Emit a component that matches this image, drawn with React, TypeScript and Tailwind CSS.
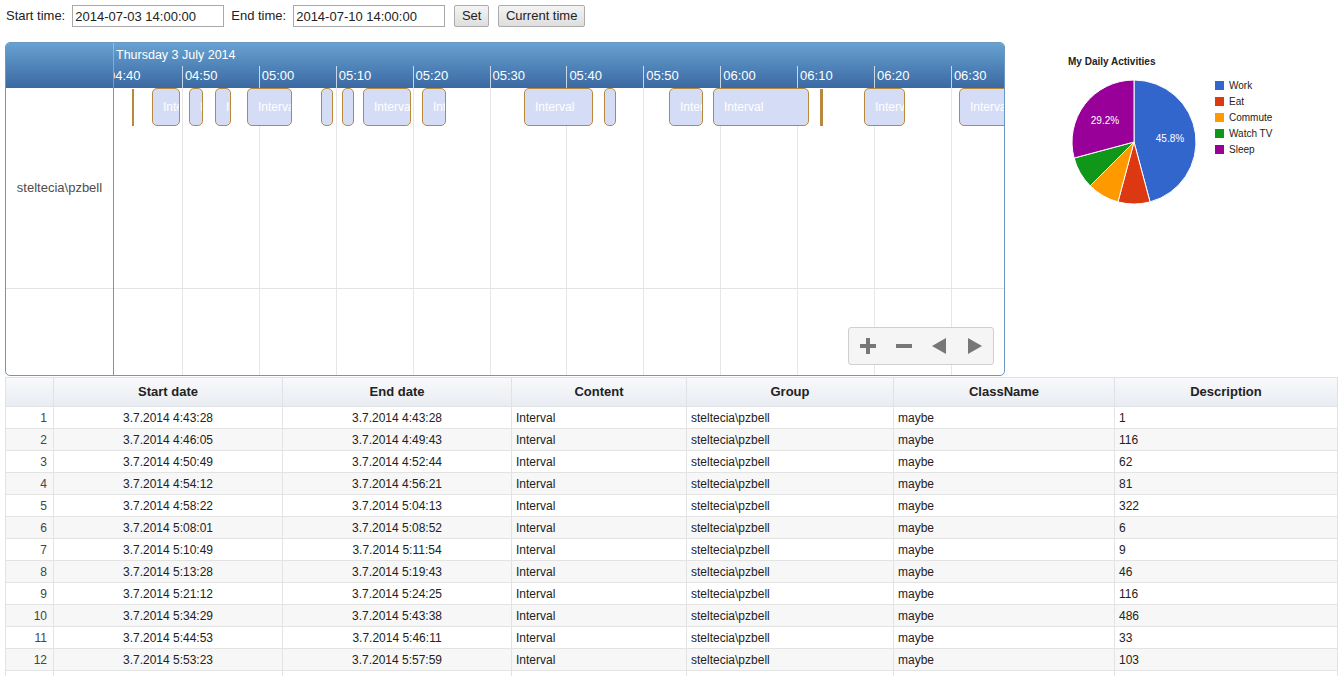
import React from "react";

const ticks = ["04:40", "04:50", "05:00", "05:10", "05:20", "05:30", "05:40", "05:50", "06:00", "06:10", "06:20", "06:30"];

// left / width in px, relative to the timeline canvas
const items: { l: number; w: number; line?: boolean }[] = [
  { l: 18, w: 2, line: true },
  { l: 38, w: 28 },
  { l: 75, w: 14 },
  { l: 101, w: 16 },
  { l: 133, w: 45 },
  { l: 207, w: 6 },
  { l: 228, w: 9 },
  { l: 249, w: 48 },
  { l: 308, w: 24 },
  { l: 410, w: 69 },
  { l: 490, w: 9 },
  { l: 555, w: 34 },
  { l: 599, w: 96 },
  { l: 706, w: 3, line: true },
  { l: 750, w: 41 },
  { l: 845, w: 60 },
];

const rows = [
  ["3.7.2014 4:43:28", "3.7.2014 4:43:28", "1"],
  ["3.7.2014 4:46:05", "3.7.2014 4:49:43", "116"],
  ["3.7.2014 4:50:49", "3.7.2014 4:52:44", "62"],
  ["3.7.2014 4:54:12", "3.7.2014 4:56:21", "81"],
  ["3.7.2014 4:58:22", "3.7.2014 5:04:13", "322"],
  ["3.7.2014 5:08:01", "3.7.2014 5:08:52", "6"],
  ["3.7.2014 5:10:49", "3.7.2014 5:11:54", "9"],
  ["3.7.2014 5:13:28", "3.7.2014 5:19:43", "46"],
  ["3.7.2014 5:21:12", "3.7.2014 5:24:25", "116"],
  ["3.7.2014 5:34:29", "3.7.2014 5:43:38", "486"],
  ["3.7.2014 5:44:53", "3.7.2014 5:46:11", "33"],
  ["3.7.2014 5:53:23", "3.7.2014 5:57:59", "103"],
  ["3.7.2014 5:59:10", "3.7.2014 6:04:02", "292"],
];

const slices = [
  { name: "Work", v: 11, c: "#3366cc" },
  { name: "Eat", v: 2, c: "#dc3912" },
  { name: "Commute", v: 2, c: "#ff9900" },
  { name: "Watch TV", v: 2, c: "#109618" },
  { name: "Sleep", v: 7, c: "#990099" },
];

function Pie() {
  const cx = 129;
  const cy = 100;
  const r = 62;
  const total = slices.reduce((s, x) => s + x.v, 0);
  let a = 0;
  const pt = (ang: number) => [cx + r * Math.sin(ang), cy - r * Math.cos(ang)];
  return (
    <svg width="334" height="200" className="block">
      <text x="63" y="23" fontSize="10" fontWeight="bold" fill="#222" fontFamily="Liberation Sans, Arial, sans-serif">
        My Daily Activities
      </text>
      {slices.map((s) => {
        const a0 = a;
        const a1 = a + (s.v / total) * Math.PI * 2;
        a = a1;
        const [x0, y0] = pt(a0);
        const [x1, y1] = pt(a1);
        const large = a1 - a0 > Math.PI ? 1 : 0;
        return (
          <path
            key={s.name}
            d={`M${cx} ${cy} L${x0} ${y0} A${r} ${r} 0 ${large} 1 ${x1} ${y1} Z`}
            fill={s.c}
            stroke="#fff"
            strokeWidth="1"
          />
        );
      })}
      <text x="165" y="100" fontSize="10" fill="#fff" textAnchor="middle" fontFamily="Liberation Sans, Arial, sans-serif">
        45.8%
      </text>
      <text x="100" y="82" fontSize="10" fill="#fff" textAnchor="middle" fontFamily="Liberation Sans, Arial, sans-serif">
        29.2%
      </text>
      {slices.map((s, i) => (
        <g key={s.name}>
          <rect x="210" y={39 + i * 16} width="9" height="9" fill={s.c} />
          <text x="224" y={47 + i * 16} fontSize="10" fill="#222" fontFamily="Liberation Sans, Arial, sans-serif">
            {s.name}
          </text>
        </g>
      ))}
    </svg>
  );
}

function Controls() {
  return (
    <div className="absolute right-[10px] bottom-[10px] flex h-[38px] w-[146px] items-center rounded-[3px] border border-[#cfcfcf] bg-[#f5f5f5]">
      <svg width="146" height="36" className="block">
        <rect x="11" y="16" width="16" height="4" fill="#777" />
        <rect x="17" y="10" width="4" height="16" fill="#777" />
        <rect x="47" y="16" width="16" height="4" fill="#777" />
        <polygon points="83,18 97,10 97,26" fill="#777" />
        <polygon points="133,18 119,10 119,26" fill="#777" />
      </svg>
    </div>
  );
}

function Timeline() {
  const tickX = (i: number) => -9 + i * 76.9;
  return (
    <div className="ml-[5px] flex h-[334px] w-[1000px] flex-col overflow-hidden rounded-[5px] border border-[#6d97c0]">
      <div className="flex h-[45px] bg-gradient-to-b from-[#67a2d1] to-[#3b69a2] text-white">
        <div className="w-[107px] shrink-0" />
        <div className="relative flex-1 overflow-hidden border-l border-white/30">
          <div className="absolute left-[2px] top-[4px] text-[12.5px] leading-[16px]">Thursday 3 July 2014</div>
          {ticks.map((t, i) => (
            <div key={t}>
              <div className="absolute top-[23px] h-[22px] w-px bg-white/70" style={{ left: tickX(i) }} />
              <div className="absolute top-[25px] text-[13px] leading-[16px]" style={{ left: tickX(i) + 3 }}>
                {t}
              </div>
            </div>
          ))}
        </div>
      </div>
      <div className="flex flex-1">
        <div className="flex w-[107px] shrink-0 flex-col">
          <div className="flex h-[201px] items-center justify-center border-b border-[#e3e3e3] text-[13px] text-[#4d4d4d]">
            steltecia\pzbell
          </div>
          <div className="flex-1" />
        </div>
        <div className="relative flex-1 overflow-hidden border-l border-[#6d97c0]">
          {ticks.map((t, i) => (
            <div key={t} className="absolute top-0 bottom-0 w-px bg-[#e6e6e6]" style={{ left: tickX(i) }} />
          ))}
          <div className="absolute left-0 right-0 top-[200px] h-px bg-[#e3e3e3]" />
          {items.map((it, i) =>
            it.line ? (
              <div key={i} className="absolute top-[1px] h-[37px] bg-[#b8893c]" style={{ left: it.l, width: it.w }} />
            ) : (
              <div
                key={i}
                className="absolute top-0 flex h-[38px] items-center overflow-hidden whitespace-nowrap rounded-[5px] border border-[#b8893c] bg-[#d5ddf6] pl-[10px] text-[12px] text-white"
                style={{ left: it.l, width: it.w }}
              >
                Interval
              </div>
            )
          )}
          <Controls />
        </div>
      </div>
    </div>
  );
}

const cols = [
  { h: "", w: "w-[48px]" },
  { h: "Start date", w: "w-[229px]" },
  { h: "End date", w: "w-[229px]" },
  { h: "Content", w: "w-[175px]" },
  { h: "Group", w: "w-[207px]" },
  { h: "ClassName", w: "w-[221px]" },
  { h: "Description", w: "w-[223px]" },
];

function DataTable() {
  return (
    <table className="ml-[5px] mt-[1px] w-[1333px] table-fixed border-collapse text-[12px] text-[#222]">
      <thead>
        <tr className="h-[29px] bg-gradient-to-b from-[#f8f9fb] to-[#e8ecf1]">
          {cols.map((c) => (
            <th key={c.h} className={`${c.w} border border-[#dfe3e8] text-center text-[13px] font-bold`}>
              {c.h}
            </th>
          ))}
        </tr>
      </thead>
      <tbody>
        {rows.map((r, i) => (
          <tr key={i} className={`h-[22px] ${i % 2 === 1 ? "bg-[#f7f7f7]" : "bg-white"}`}>
            <td className="border border-[#e3e3e3] pr-[6px] text-right text-[#444]">{i + 1}</td>
            <td className="border border-[#e3e3e3] text-center">{r[0]}</td>
            <td className="border border-[#e3e3e3] text-center">{r[1]}</td>
            <td className="border border-[#e3e3e3] pl-[4px]">Interval</td>
            <td className="border border-[#e3e3e3] pl-[4px]">steltecia\pzbell</td>
            <td className="border border-[#e3e3e3] pl-[4px]">maybe</td>
            <td className="border border-[#e3e3e3] pl-[4px]">{r[2]}</td>
          </tr>
        ))}
      </tbody>
    </table>
  );
}

export default function App() {
  return (
    <div className="min-h-[676px] bg-white font-['Liberation_Sans',Arial,sans-serif] text-[#222]">
      <div className="flex items-center pl-[6px] pt-[5px] text-[13px]">
        <span>Start time:</span>
        <input
          readOnly
          value="2014-07-03 14:00:00"
          className="ml-[7px] h-[22px] w-[152px] border border-[#a9a9a9] px-[2px] text-[13px] outline-none"
        />
        <span className="ml-[7px]">End time:</span>
        <input
          readOnly
          value="2014-07-10 14:00:00"
          className="ml-[7px] h-[22px] w-[152px] border border-[#a9a9a9] px-[2px] text-[13px] outline-none"
        />
        <button className="ml-[9px] h-[22px] w-[35px] rounded-[2px] border border-[#acacac] bg-gradient-to-b from-[#f4f4f4] to-[#dedede] text-[13px]">
          Set
        </button>
        <button className="ml-[9px] h-[22px] w-[87px] rounded-[2px] border border-[#acacac] bg-gradient-to-b from-[#f4f4f4] to-[#dedede] text-[13px]">
          Current time
        </button>
      </div>
      <div className="mt-[15px] flex">
        <Timeline />
        <Pie />
      </div>
      <DataTable />
    </div>
  );
}
